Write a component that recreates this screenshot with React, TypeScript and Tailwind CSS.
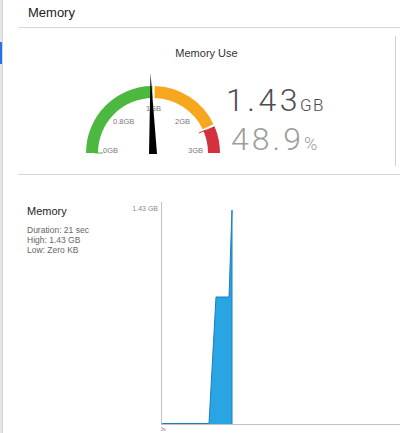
import React from "react";

const cx = 153;
const cy = 153;
const R = 67;
const r = 55;

const pt = (rad: number, deg: number) => {
  const a = (deg * Math.PI) / 180;
  return `${(cx + rad * Math.cos(a)).toFixed(2)} ${(cy - rad * Math.sin(a)).toFixed(2)}`;
};

// annular sector from angle a0 down to a1 (degrees, 0 = right, 180 = left)
const sector = (a0: number, a1: number) =>
  `M ${pt(R, a0)} A ${R} ${R} 0 0 1 ${pt(R, a1)} L ${pt(r, a1)} A ${r} ${r} 0 0 0 ${pt(r, a0)} Z`;

const tick = (deg: number) => {
  const [x1, y1] = pt(50, deg).split(" ");
  const [x2, y2] = pt(58, deg).split(" ");
  return { x1, y1, x2, y2 };
};

const Gauge = () => (
  <svg width="145" height="95" viewBox="80 65 145 95" className="block shrink-0">
    <path d={sector(180, 90.5)} fill="#4db840" />
    <path d={sector(88.5, 25.5)} fill="#f7a71e" />
    <path d={sector(23.5, 0)} fill="#d3323c" />
    <line {...tick(180)} stroke="#4db840" strokeWidth="1" />
    <line {...tick(23.5)} stroke="#d3323c" strokeWidth="1" />
    <g fill="#7a7a7a" fontSize="7.5" fontFamily="'Liberation Sans', Arial, sans-serif">
      <text x="103" y="153">0GB</text>
      <text x="113" y="123.5">0.8GB</text>
      <text x="146" y="110.5">1GB</text>
      <text x="175" y="123.5">2GB</text>
      <text x="188" y="153">3GB</text>
    </g>
    <polygon points="150.5,73 149,154 157,154" fill="#000" />
  </svg>
);

const Chart = () => (
  <svg width="239" height="258" viewBox="161 175 239 258" className="block">
    <polygon
      points="162,424 209,424 216,297 229,297 232,210 232,424"
      fill="#2aa5e3"
    />
    <polyline
      points="162,423.5 209,423.5 216,297 229,297 232,210 232,424"
      fill="none"
      stroke="#1a7fc0"
      strokeWidth="1"
    />
    <line x1="161.5" y1="202" x2="161.5" y2="425" stroke="#c4c4c4" strokeWidth="1.2" />
    <line x1="161" y1="424.5" x2="400" y2="424.5" stroke="#c4c4c4" strokeWidth="1.2" />
    <text x="159.5" y="431" fontSize="6" fill="#8a8a8a" fontFamily="'Liberation Sans', Arial, sans-serif">
      0s
    </text>
  </svg>
);

export default function App() {
  return (
    <div className="w-[400px] h-[433px] bg-white flex overflow-hidden font-['Liberation_Sans',Arial,sans-serif]">
      {/* sidebar edge */}
      <div className="w-[3px] shrink-0 bg-[#e6e6ea] border-r border-[#d4d4d8] flex flex-col">
        <div className="h-[42px]" />
        <div className="h-[22px] w-[2px] bg-[#2b6fe8]" />
      </div>

      <div className="flex-1 pl-[15px] flex flex-col">
        <div className="h-[28px] border-b border-[#d8d8d8] pl-[10px] text-[13px] leading-[26px] text-[#222]">
          Memory
        </div>

        {/* gauge panel */}
        <div className="h-[147px] border-b border-[#d8d8d8] flex">
          <div className="flex-1 flex flex-col pt-[19px]">
            <div className="text-center text-[11px] leading-[13px] text-[#333]">Memory Use</div>
            <div className="mt-[5px] ml-[62px] flex items-start">
              <Gauge />
              <div className="ml-[1px] mt-[19px] flex flex-col font-['Roboto',sans-serif] font-light">
                <div className="flex items-baseline leading-none text-[#4d4d4d]">
                  <span className="text-[32px] tracking-[3.5px]">1.43</span>
                  <span className="-ml-[1px] text-[17px] tracking-[1.5px]">GB</span>
                </div>
                <div className="mt-[7px] ml-[5px] flex items-baseline leading-none text-[#9d9d9d]">
                  <span className="text-[32px] tracking-[3px]">48.9</span>
                  <span className="text-[18px]">%</span>
                </div>
              </div>
            </div>
          </div>
          <div className="w-px bg-[#d0d0d0] my-[8px]" />
          <div className="w-[4px]" />
        </div>

        {/* chart panel */}
        <div className="flex-1 flex">
          <div className="w-[143px] shrink-0 flex pt-[30px]">
            <div className="flex-1 pl-[9px]">
              <div className="text-[11px] leading-[13px] text-[#222]">Memory</div>
              <div className="mt-[7px] text-[8.5px] leading-[10px] text-[#666]">
                <div>Duration: 21 sec</div>
                <div>High: 1.43 GB</div>
                <div>Low: Zero KB</div>
              </div>
            </div>
            <div className="pr-[3px] text-[7px] leading-[8px] text-[#8a8a8a]">1.43 GB</div>
          </div>
          <Chart />
        </div>
      </div>
    </div>
  );
}
